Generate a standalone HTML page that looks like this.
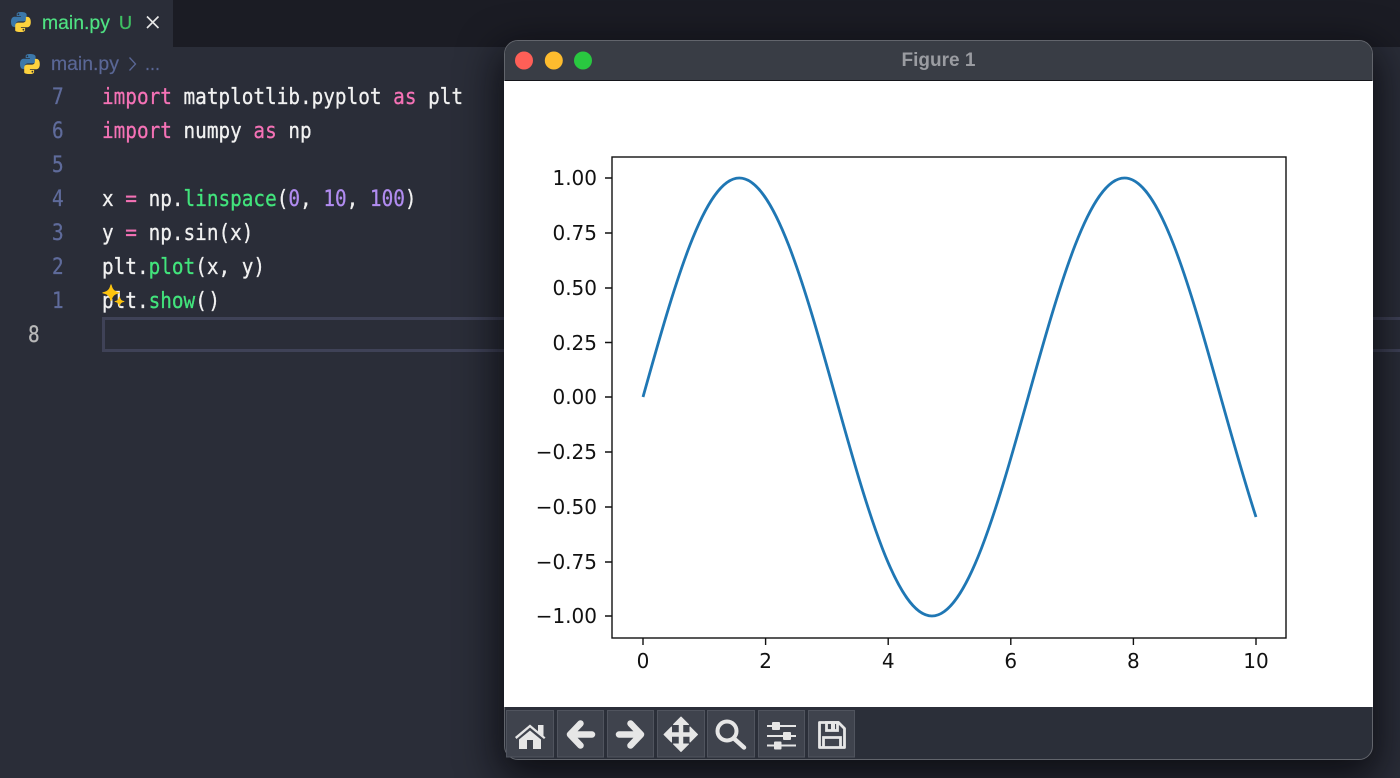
<!DOCTYPE html>
<html><head><meta charset="utf-8"><style>
html,body{margin:0;padding:0;width:1400px;height:778px;overflow:hidden;background:#2a2d38}
.a{position:absolute}
.sans{font-family:"Liberation Sans",sans-serif}
.code,.ln{position:absolute;font:19.35px/34px "DejaVu Sans Mono","Liberation Mono",monospace;white-space:pre;height:34px;transform:scaleY(1.15);-webkit-text-stroke:.25px currentColor}
.code{left:102px;color:#f1f1f1}
.ln{color:#5f6b9b}
.k{color:#f572b6}.f{color:#42e47c}.n{color:#b18cf0}
</style></head><body>
<div class="a" style="left:0;top:0;width:1400px;height:47px;background:#1b1c24"></div>
<div class="a" style="left:0;top:0;width:173px;height:47px;background:#2a2d38"></div>
<svg class="a" style="left:0;top:0" width="1400" height="778">
<defs>
<g id="py"><path d="M9.8 0C5.500 0 5.700 1.900 5.700 1.900V4h4.200v.8H3.600S0 4.500 0 9.900s3.200 5.200 3.200 5.200h1.700v-2.500s-.1-3.200 3.100-3.200h4.600s3 0 3-2.900V2.800S16.100 0 9.800 0zM7.400 1.400a.9.9 0 1 1 0 1.800.9.9 0 0 1 0-1.800z" fill="#3c78aa"/><path d="M10 20c4.300 0 4.100-1.900 4.100-1.900V16H9.900v-.8h6.300s3.600.3 3.600-5.100-3.200-5.200-3.200-5.200h-1.700v2.500s.1 3.200-3.100 3.200H7.200s-3 0-3 2.900v4.700S3.700 20 10 20zm2.400-1.400a.9.9 0 1 1 0-1.800.9.9 0 0 1 0 1.800z" fill="#fdd23e"/></g>
</defs>
<use href="#py" x="11" y="12"/>
<use href="#py" x="20" y="54"/>
<path d="M147 16.500l11.500 11.500M158.500 16.500l-11.500 11.500" stroke="#e8e8e8" stroke-width="1.600" fill="none"/>
<path d="M129.500 57.500l6 6.500-6 6.500" stroke="#5a6796" stroke-width="1.300" fill="none"/>
</svg>
<div class="a sans" style="left:42px;top:11px;font-size:19.4px;line-height:24px;color:#4fe283;-webkit-text-stroke:.2px currentColor">main.py</div>
<div class="a sans" style="left:119px;top:11px;font-size:18px;line-height:24px;color:#3fbf62;-webkit-text-stroke:.3px currentColor">U</div>
<div class="a sans" style="left:51px;top:52px;font-size:19.4px;line-height:24px;color:#5a6796;-webkit-text-stroke:.2px currentColor">main.py</div>
<div class="a sans" style="left:145px;top:52px;font-size:18px;line-height:24px;color:#5a6796;-webkit-text-stroke:.2px currentColor">...</div>

<div class="ln" style="left:52px;top:80px">7</div>
<div class="ln" style="left:52px;top:114px">6</div>
<div class="ln" style="left:52px;top:148px">5</div>
<div class="ln" style="left:52px;top:182px">4</div>
<div class="ln" style="left:52px;top:216px">3</div>
<div class="ln" style="left:52px;top:250px">2</div>
<div class="ln" style="left:52px;top:284px">1</div>
<div class="ln" style="left:28px;top:318px;color:#b9b9b9">8</div>
<div class="code" style="top:80px"><span class="k">import</span> matplotlib.pyplot <span class="k">as</span> plt</div>
<div class="code" style="top:114px"><span class="k">import</span> numpy <span class="k">as</span> np</div>
<div class="code" style="top:182px">x <span class="k">=</span> np.<span class="f">linspace</span>(<span class="n">0</span>, <span class="n">10</span>, <span class="n">100</span>)</div>
<div class="code" style="top:216px">y <span class="k">=</span> np.sin(x)</div>
<div class="code" style="top:250px">plt.<span class="f">plot</span>(x, y)</div>
<div class="code" style="top:284px">plt.<span class="f">show</span><span style="letter-spacing:1.5px">(</span>)</div>
<div class="a" style="left:102px;top:317px;width:1298px;height:35px;box-sizing:border-box;border:3px solid #3f4257;border-right:0"></div>
<svg class="a" style="left:0;top:0" width="200" height="340">
<path d="M111 285c1 5 3.500 7 8 7.800-4.500.8-7 2.800-8 7.700-1-4.900-3.500-6.900-8-7.700 4.500-.8 7-2.800 8-7.800z" fill="#fdc40f" stroke="#fdc40f" stroke-width="1.200" stroke-linejoin="round"/>
<path d="M119.500 297c.6 3 1.700 3.900 4.500 4.500-2.800.6-3.900 1.500-4.500 4.500-.6-3-1.700-3.900-4.500-4.500 2.800-.6 3.900-1.500 4.500-4.500z" fill="#fdc40f" stroke="#fdc40f" stroke-width=".8" stroke-linejoin="round"/>
</svg>

<div class="a" style="left:504px;top:40px;width:869px;height:720px;box-sizing:border-box;border-radius:14px;background:#2b2f39;box-shadow:0 14px 40px 6px rgba(6,6,10,.75);overflow:hidden;border:1px solid #62656c">
<div class="a" style="left:0;top:0;width:867px;height:39px;background:#393d45;border-bottom:1px solid #14151a"></div>
</div>
<div class="a" style="left:504px;top:81px;width:869px;height:626px;background:#fff"></div>
<div class="a sans" style="left:504px;top:49px;width:869px;text-align:center;font-size:19px;line-height:24px;font-weight:bold;color:#9a9ca1">Figure 1</div>

<svg class="a" style="left:0;top:0" width="1400" height="778">
<circle cx="524" cy="60.500" r="9" fill="#fe5f57"/>
<circle cx="553.800" cy="60.500" r="9" fill="#febc2e"/>
<circle cx="583" cy="60.500" r="9" fill="#29c840"/>

<rect x="612" y="157" width="674" height="481" fill="none" stroke="#111" stroke-width="1.400"/>
<path d="M643 397C674.400 284.800 704.400 178 739.300 178C774.200 178 804.200 284.800 835.600 397C867 509.200 897 616 931.900 616C966.700 616 996.800 509.200 1028.200 397C1059.600 284.800 1089.600 178 1124.500 178C1159.300 178 1189.300 284.800 1220.700 397C1232.500 439 1244.200 480.900 1256 517" fill="none" stroke="#1f77b4" stroke-width="2.800"/>
<path d="M605 178h7M605 233h7M605 288h7M605 342.500h7M605 397h7M605 452h7M605 507h7M605 562h7M605 616h7M643 638v7M765.600 638v7M888.200 638v7M1010.800 638v7M1133.400 638v7M1256 638v7" stroke="#111" stroke-width="1.400" fill="none"/>
<g font-family="'DejaVu Sans',sans-serif" font-size="20" fill="#111" text-anchor="end">
<text x="597" y="185">1.00</text><text x="597" y="240">0.75</text><text x="597" y="295">0.50</text><text x="597" y="350">0.25</text><text x="597" y="404">0.00</text><text x="597" y="459">−0.25</text><text x="597" y="514">−0.50</text><text x="597" y="569">−0.75</text><text x="597" y="623">−1.00</text>
</g>
<g font-family="'DejaVu Sans',sans-serif" font-size="20" fill="#111" text-anchor="middle">
<text x="643" y="668">0</text><text x="765.600" y="668">2</text><text x="888.200" y="668">4</text><text x="1010.800" y="668">6</text><text x="1133.400" y="668">8</text><text x="1256" y="668">10</text>
</g>

<g fill="#3f434d" stroke="#50545e" stroke-width="1">
<rect x="506.500" y="710.500" width="47" height="46.500"/><rect x="557.500" y="710.500" width="46" height="46.500"/><rect x="607.500" y="710.500" width="46" height="46.500"/><rect x="657.500" y="710.500" width="47" height="46.500"/><rect x="707.500" y="710.500" width="47" height="46.500"/><rect x="758.500" y="710.500" width="46" height="46.500"/><rect x="808.500" y="710.500" width="46" height="46.500"/>
</g>
<!-- home -->
<path d="M515 737L530 724.500l8 6.700V725h5.500v10.800l2 1.700-1.500 1.500L530 727.500 516.500 739z" fill="#e6e6e6"/>
<path d="M519 739.500l11-9 11 9V749h-8v-9h-6v9h-8z" fill="#e6e6e6"/>
<!-- arrows -->
<path d="M592 734.500H572M580.500 723.500L570 734.500l10.500 11" fill="none" stroke="#e6e6e6" stroke-width="6.500" stroke-linecap="round" stroke-linejoin="round"/>
<path d="M619 734.500H639M630.500 723.500L641 734.500l-10.500 11" fill="none" stroke="#e6e6e6" stroke-width="6.500" stroke-linecap="round" stroke-linejoin="round"/>
<!-- move -->
<path d="M667 734.500h28M681 721v27" stroke="#e6e6e6" stroke-width="4.500" fill="none"/>
<path d="M681 717l7.500 7.500h-15zM681 751.500l7.500-7.500h-15zM664 734.500l7.500-7.500v15zM697.500 734.500l-7.500-7.500v15z" fill="#e6e6e6" stroke="#e6e6e6" stroke-width="1" stroke-linejoin="round"/>
<!-- zoom -->
<circle cx="727" cy="731" r="9.500" fill="none" stroke="#e6e6e6" stroke-width="4"/>
<path d="M734.500 739l9.500 8.500" stroke="#e6e6e6" stroke-width="4.500" stroke-linecap="round"/>
<!-- sliders -->
<g fill="#e6e6e6">
<path d="M767 725h29v2h-29zM767 735h29v2h-29zM767 744.500h29v2h-29z"/>
<rect x="772" y="722" width="8" height="8" rx="1"/><rect x="783" y="732" width="8" height="8" rx="1"/><rect x="774" y="741.500" width="7.500" height="8" rx="1"/>
</g>
<!-- save -->
<path d="M819.500 722.500h19l6 6v19h-25z" fill="none" stroke="#e6e6e6" stroke-width="2.800" stroke-linejoin="round"/>
<path d="M826.500 722.500v8h11v-8z" fill="none" stroke="#e6e6e6" stroke-width="2.800"/>
<rect x="831" y="723" width="4" height="7" fill="#e6e6e6"/>
<path d="M823.500 747.500v-10h17v10" fill="none" stroke="#e6e6e6" stroke-width="2.800"/>
</svg>
</body></html>
